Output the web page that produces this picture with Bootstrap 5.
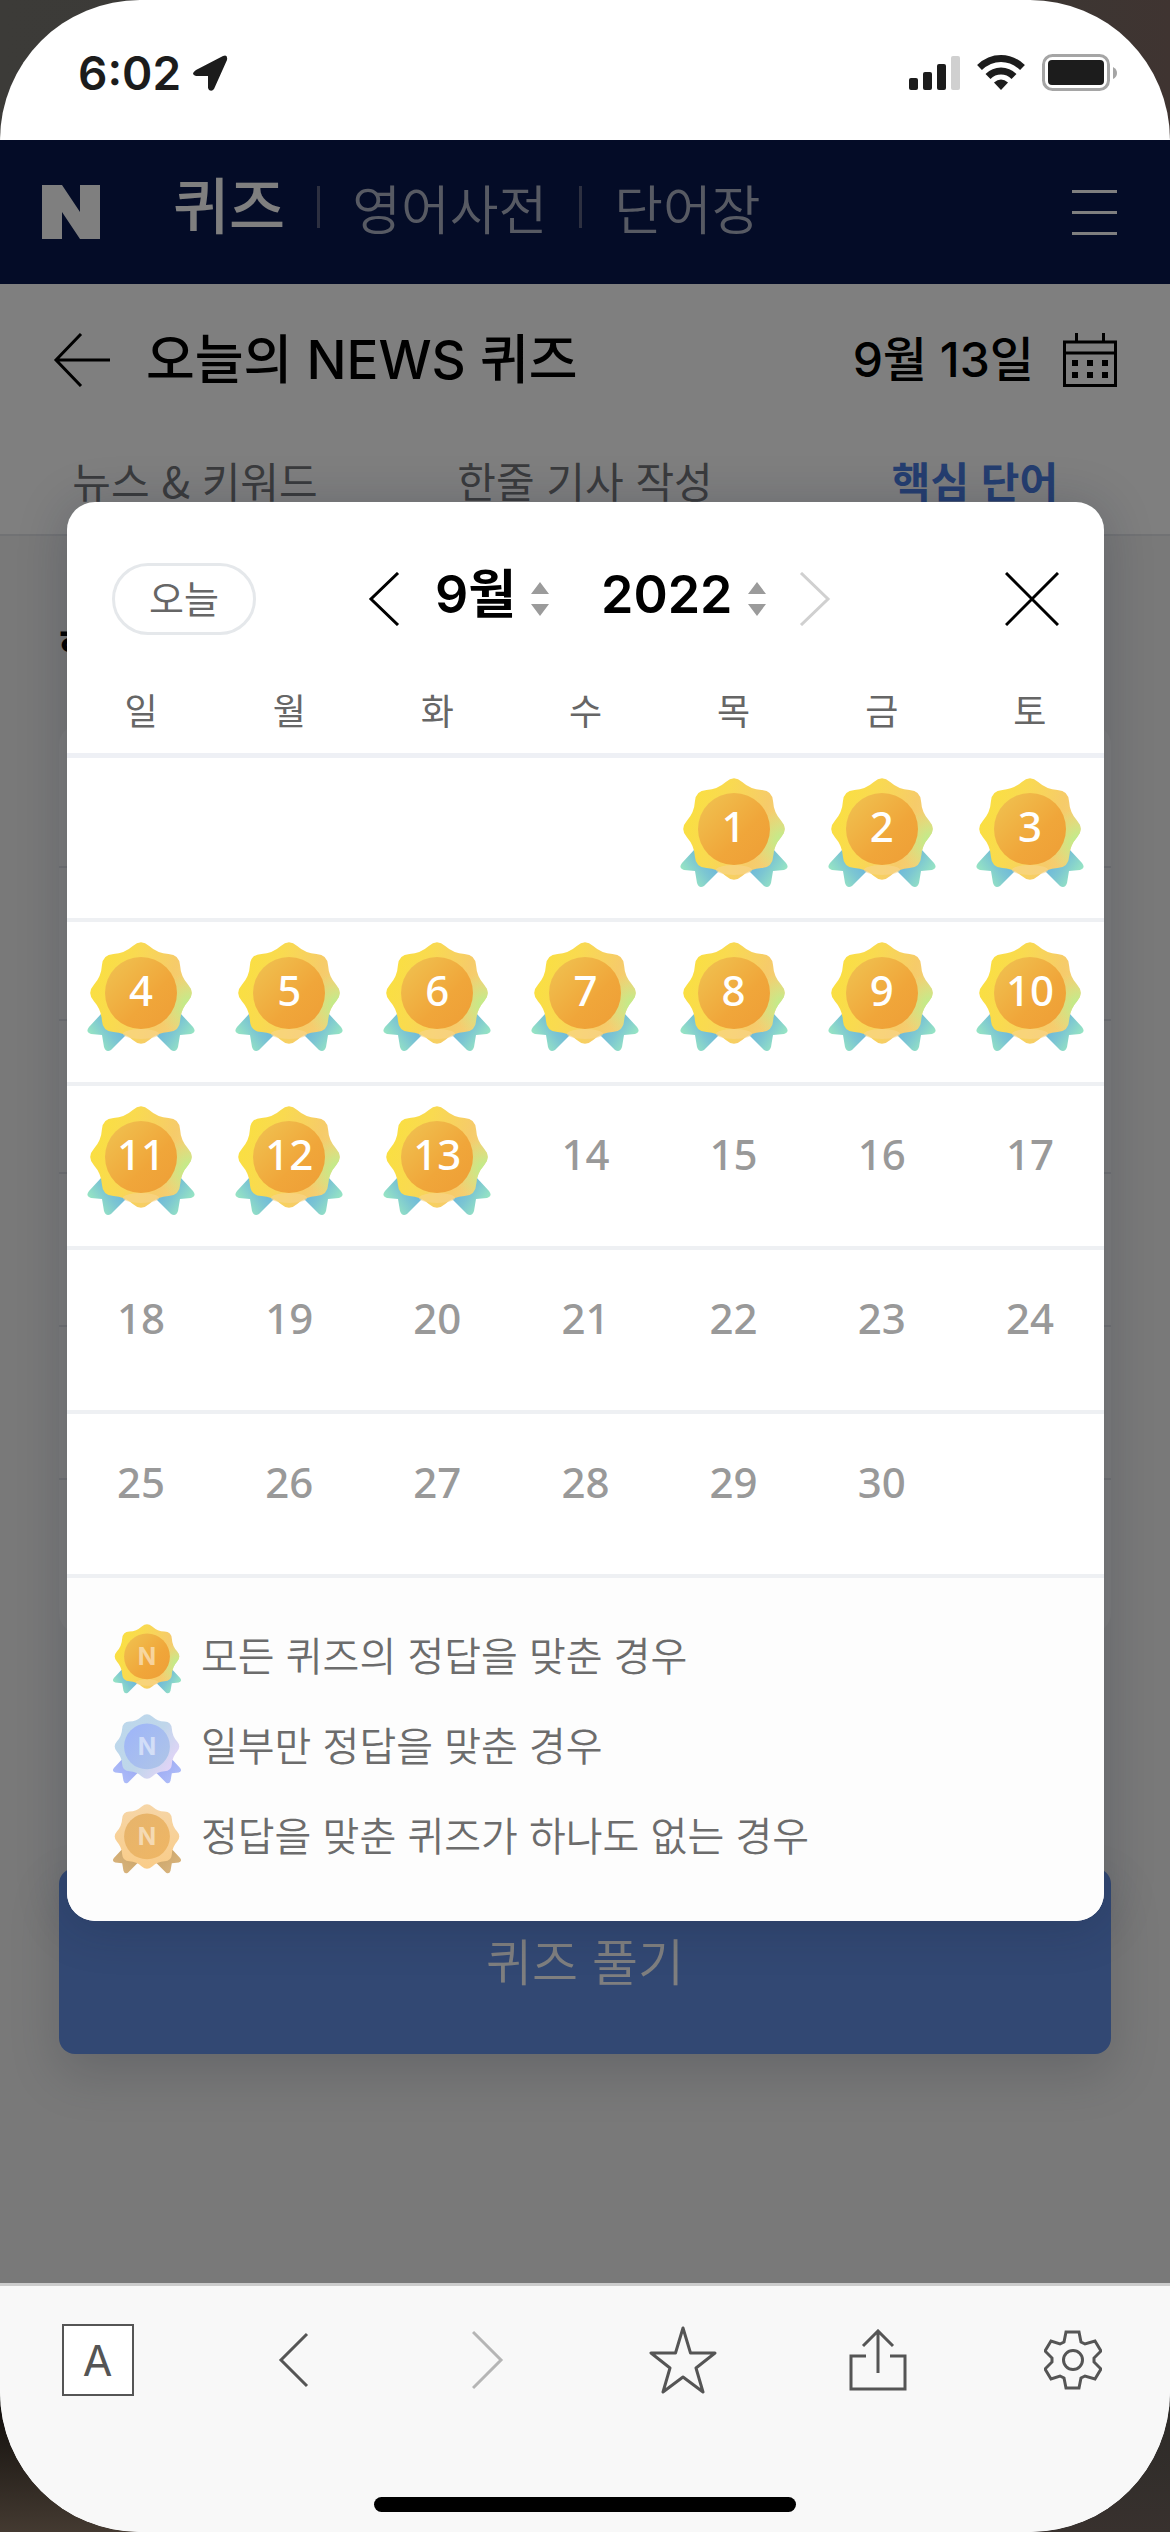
<!DOCTYPE html>
<html lang="ko">
<head>
<meta charset="utf-8">
<meta name="viewport" content="width=device-width, initial-scale=1">
<title>오늘의 NEWS 퀴즈</title>
<link href="https://cdn.jsdelivr.net/npm/bootstrap@5.3.0/dist/css/bootstrap.min.css" rel="stylesheet">
<style>
  :root { --edge: 59px; --mixed: Inter, "Noto Sans CJK KR", sans-serif; }
  body {
    font-family: "Noto Sans CJK KR", sans-serif;
    color: #000;
    background:
      linear-gradient(#0c0a08, #443a31) left bottom / 50% 140px no-repeat,
      linear-gradient(#2b2a27, #38312e) right bottom / 50% 140px no-repeat,
      linear-gradient(90deg, #3c3b38, #3a3834 80%, #3f3431);
  }
  a { color: inherit; text-decoration: none; }
  button { font: inherit; color: inherit; background: none; border: 0; padding: 0; }
  svg { display: block; flex: none; }
  .line-icon { fill: none; stroke: currentColor; stroke-width: 3; }

  .phone-shell { min-height: 100vh; border-radius: 140px; background: #fff; }
  .status-bar { height: 140px; padding: 6px 53px 0 78px; color: #1c1c1c; }
  .status-time { font: 600 46px/60px Inter, sans-serif; margin-right: 11px; }
  .status-icons { gap: 17px; }

  .page-area { background: #f2f2f2; }
  .dim-layer { inset: 0; background: rgba(0, 0, 0, .5); }

  .site-header { height: 144px; padding: 0 53px 0 42px; background: #08184e; color: #fff; }
  .site-nav { margin-left: 73px; gap: 32px; font-size: 53px; line-height: 72px; font-weight: 350; color: #afb4c6; padding-bottom: 10px; }
  .site-nav .current { font-size: 61px; font-weight: 500; color: #fff; padding-bottom: 8px; }
  .site-nav .bar { width: 3px; height: 42px; background: #5a6080; }

  .title-row { height: 152px; padding: 0 53px; }
  .title-row h1 { font: 500 53px/72px var(--mixed); margin-left: 36px; }
  .date-button { font: 500 48px/72px var(--mixed); gap: 29px; }
  .tab-row { font-size: 42px; line-height: 60px; color: #74767a; border-bottom: 2px solid #e2e4e8; padding: 14px 0 24px; }
  .tab-row .current { color: #4a7de0; font-weight: 700; }
  .top-panel { background: #fff; }

  .word-section { padding: 80px var(--edge) 0; }
  .word-section h2 { font-size: 44px; line-height: 60px; font-weight: 700; margin-bottom: 49px; }
  .word-list { background: #fafafa; border-radius: 20px; }
  .word-list li { height: 153px; border-bottom: 2px solid #e2e4e8; }
  .word-list li:first-child { height: 143px; }
  .word-list li:last-child { border-bottom: 0; }
  .start-button { margin: 235px 0 226px; height: 186px; padding-bottom: 4px; border-radius: 16px; background: #6490e6; color: #fff; font-size: 50px; line-height: 72px; font-weight: 350; box-shadow: 0 20px 50px rgba(40, 50, 80, .18); }

  .calendar-dialog { top: 362px; left: 67px; right: 66px; border-radius: 28px; background: #fff; box-shadow: 0 4px 50px rgba(20, 30, 50, .24); }
  .calendar-head { padding: 61px 45px 0; }
  .today-button { width: 144px; height: 72px; border: 3px solid #e5e8eb; border-radius: 36px; font-size: 38px; line-height: 60px; padding-bottom: 4px; color: #666; }
  .month-picker { margin-left: 112px; }
  .month-picker select { appearance: none; border: 0; padding: 0; background: none; font: 600 52px/64px var(--mixed); height: 64px; color: #000; }
  .month-picker .pick-month { width: 86px; margin: 0 10px 8px 35px; }
  .month-picker .pick-year { width: 137px; margin: 0 10px 8px 52px; }
  .month-picker .next { margin-left: 33px; color: #d0d0d0; }

  .month-grid { table-layout: fixed; text-align: center; margin: 0; }
  .month-grid th { padding: 50px 0 20px; font-size: 36px; line-height: 48px; font-weight: 400; color: #666; border-bottom: 5px solid #eef0f5; }
  .month-grid td { padding: 20px 0 30px; border-bottom: 4px solid #eef0f3; height: 164px; vertical-align: top; }
  .day { display: inline-grid; justify-items: center; width: 108px; height: 110px; vertical-align: top; font: 500 42px/96px "Noto Sans", sans-serif; color: #999; }
  .day > * { grid-area: 1 / 1; }
  .day svg { width: 108px; height: 110px; }
  .day.won { color: #fff; }

  .legend-panel { padding: 46px 45px 47px; background: #fdfdfd; gap: 20px; font-size: 40px; line-height: 60px; font-weight: 350; color: #6c6c6c; border-radius: 0 0 28px 28px; }
  .legend-panel li { gap: 19px; height: 70px; }
  .legend-panel svg { width: 70px; height: 70px; }
  .medal-letter { font: 700 38px Inter, sans-serif; fill: #fff; fill-opacity: .5; text-anchor: middle; }

  .browser-bar { background: #f8f8f8; border-top: 3px solid #ccc; border-radius: 0 0 140px 140px; color: #555; }
  .browser-bar nav { height: 147px; }
  .browser-bar .letter-box { width: 72px; height: 72px; border: 2px solid #555; background: #fff; font: 400 43px/68px Inter, sans-serif; }
  .browser-bar .off { color: #b5b5b5; }
  .home-line { width: 36%; height: 15px; border-radius: 8px; background: #000; margin: 64px auto 20px; }
</style>
<script src="https://cdn.jsdelivr.net/npm/bootstrap@5.3.0/dist/js/bootstrap.bundle.min.js"></script>
</head>
<body>

<svg width="0" height="0" class="position-absolute" aria-hidden="true">
  <defs>
    <path id="petals" d="M8.2-47.1Q16.5-39.7 27.5-39.1Q38.5-38.5 39.1-27.5Q39.7-16.5 47.1-8.2Q54.5 0 47.1 8.2Q39.7 16.5 39.1 27.5Q38.5 38.5 27.5 39.1Q16.5 39.7 8.2 47.1Q0 54.5-8.2 47.1Q-16.5 39.7-27.5 39.1Q-38.5 38.5-39.1 27.5Q-39.7 16.5-47.1 8.2Q-54.5 0-47.1-8.2Q-39.7-16.5-39.1-27.5Q-38.5-38.5-27.5-39.1Q-16.5-39.7-8.2-47.1Q0-54.5 8.2-47.1Z"/>
    <path id="tail" d="M-40 21L-52 34Q-56 39-50 41L-39 42L-37 54Q-35 60-30 57L-14 41Z"/>
    <linearGradient id="gGold" x1="0" y1=".3" x2="1" y2=".6"><stop offset="0" stop-color="#fae040"/><stop offset=".35" stop-color="#f9da50"/><stop offset=".75" stop-color="#f6cb6a"/><stop offset="1" stop-color="#f3d27a"/></linearGradient>
    <radialGradient id="gGreen" cx=".98" cy=".62" r=".32"><stop offset="0" stop-color="#b9f08e"/><stop offset="1" stop-color="#c8ec8c" stop-opacity="0"/></radialGradient>
    <linearGradient id="gDisk" x1="0" y1="0" x2="1" y2="1"><stop offset="0" stop-color="#f0c452"/><stop offset=".6" stop-color="#f0a63a"/><stop offset="1" stop-color="#ee9e36"/></linearGradient>
    <linearGradient id="gTeal" x1="1" y1=".2" x2=".1" y2=".8"><stop offset="0" stop-color="#62aee2"/><stop offset=".5" stop-color="#7cc6d2"/><stop offset="1" stop-color="#9decc0"/></linearGradient>
    <linearGradient id="gIce" x1="0" y1="0" x2="1" y2=".7"><stop offset="0" stop-color="#bcd8ec"/><stop offset=".6" stop-color="#bfd6ea"/><stop offset="1" stop-color="#e4d4f8"/></linearGradient>
    <linearGradient id="gIceDisk" x1="0" y1="0" x2="1" y2="1"><stop offset="0" stop-color="#9db4fa"/><stop offset="1" stop-color="#b0c6e6"/></linearGradient>
    <linearGradient id="gIceTail" x1="1" y1="0" x2="0" y2="1"><stop offset="0" stop-color="#98a6f2"/><stop offset="1" stop-color="#b4c2fa"/></linearGradient>
    <linearGradient id="gTan" x1="0" y1="0" x2="0" y2="1"><stop offset="0" stop-color="#f6d6a8"/><stop offset="1" stop-color="#f9cc88"/></linearGradient>
    <linearGradient id="gTanDisk" x1="0" y1="0" x2="1" y2="1"><stop offset="0" stop-color="#e6b46c"/><stop offset="1" stop-color="#efb664"/></linearGradient>
    <linearGradient id="gTanTail" x1="1" y1="0" x2="0" y2="1"><stop offset="0" stop-color="#c8a266"/><stop offset="1" stop-color="#dcb882"/></linearGradient>
    <symbol id="gold" viewBox="-54 -51 108 110">
      <g fill="url(#gTeal)"><use href="#tail"/><use href="#tail" transform="scale(-1 1)"/></g>
      <use href="#petals" fill="url(#gGold)"/><use href="#petals" fill="url(#gGreen)"/>
      <ellipse cy="41" rx="18" ry="5" fill="#f8d68c" opacity=".6"/>
      <circle r="36" fill="url(#gDisk)"/>
    </symbol>
    <symbol id="ice" viewBox="-54 -51 108 110">
      <g fill="url(#gIceTail)"><use href="#tail"/><use href="#tail" transform="scale(-1 1)"/></g>
      <use href="#petals" fill="url(#gIce)"/><circle r="36" fill="url(#gIceDisk)"/>
    </symbol>
    <symbol id="tan" viewBox="-54 -51 108 110">
      <g fill="url(#gTanTail)"><use href="#tail"/><use href="#tail" transform="scale(-1 1)"/></g>
      <use href="#petals" fill="url(#gTan)"/><circle r="36" fill="url(#gTanDisk)"/>
    </symbol>
    <symbol id="updown" viewBox="0 0 18 34"><path d="M9 0L18 12H0ZM0 22H18L9 34Z" fill="#9b9b9b"/></symbol>
  </defs>
</svg>

<div class="phone-shell d-flex flex-column overflow-hidden">

  <div class="status-bar d-flex align-items-center">
    <span class="status-time">6:02</span>
    <svg width="37" height="38" viewBox="0 0 37 38"><path d="M4 16L31 2Q36 0 35 6L22 35Q20 38 17 36L16 34V22H4Q-2 20 4 16Z" fill="currentColor"/></svg>
    <div class="status-icons d-flex align-items-center ms-auto">
      <svg width="51" height="34" viewBox="0 0 51 34" fill="currentColor"><rect y="22" width="9" height="12" rx="2"/><rect x="14" y="16" width="9" height="18" rx="2"/><rect x="28" y="8" width="9" height="26" rx="2"/><rect x="42" width="9" height="34" rx="2" fill="#d0d0d0"/></svg>
      <svg width="48" height="36" viewBox="0 0 48 36"><g fill="none" stroke="currentColor" stroke-width="7"><path d="M2.500 12.500Q12 3.500 24 3.500T45.500 12.500"/><path d="M11 21.500Q16.500 16 24 16T37 21.500"/></g><path d="M17 27.500Q24 21.500 31 27.500L24 35Z" fill="currentColor"/></svg>
      <svg width="75" height="38" viewBox="0 0 75 38"><rect x="1.500" y="1.500" width="65" height="34" rx="9" fill="none" stroke="#a5a5a5" stroke-width="3"/><rect x="6" y="6" width="56" height="25" rx="4" fill="currentColor"/><path d="M71 13Q75 15 75 19T71 25Z" fill="#a5a5a5"/></svg>
    </div>
  </div>

  <div class="page-area position-relative flex-grow-1">
    <header class="site-header d-flex align-items-center">
      <a href="#" aria-label="네이버"><svg width="58" height="54" viewBox="0 0 58 54"><path d="M0 0H20L38 27V0H58V54H38L20 27V54H0Z" fill="#fff"/></svg></a>
      <nav class="site-nav d-flex align-items-center">
        <a href="#" class="current">퀴즈</a><span class="bar"></span>
        <a href="#">영어사전</a><span class="bar"></span>
        <a href="#">단어장</a>
      </nav>
      <button class="ms-auto" aria-label="메뉴"><svg class="line-icon" width="45" height="45" viewBox="0 0 45 45"><path d="M0 1.500H45M0 22.500H45M0 43.500H45"/></svg></button>
    </header>

    <div class="top-panel">
      <div class="title-row d-flex align-items-center">
        <button aria-label="뒤로"><svg class="line-icon" width="57" height="54" viewBox="0 0 57 54"><path d="M28 1L3 27L28 53M3 27H57"/></svg></button>
        <h1 class="mb-0">오늘의 NEWS 퀴즈</h1>
        <button class="date-button d-flex align-items-center ms-auto">9월 13일
          <svg width="54" height="54" viewBox="0 0 54 54"><path d="M1.500 9H52.500V52.500H1.500ZM1.500 20H52.500M13.500 0V9M40.500 0V9" fill="none" stroke="currentColor" stroke-width="3"/><path d="M9 27h6v6H9zM24 27h6v6h-6zM39 27h6v6h-6zM9 39h6v6H9zM24 39h6v6h-6zM39 39h6v6h-6z" fill="currentColor"/></svg>
        </button>
      </div>
      <nav class="tab-row row g-0 text-center">
        <a href="#" class="col">뉴스 &amp; 키워드</a>
        <a href="#" class="col">한줄 기사 작성</a>
        <a href="#" class="col current">핵심 단어</a>
      </nav>
    </div>

    <main class="word-section">
      <h2>핵심</h2>
      <ul class="word-list list-unstyled mb-0"><li></li><li></li><li></li><li></li><li></li><li></li></ul>
      <button class="start-button d-block w-100">퀴즈 풀기</button>
    </main>

    <div class="dim-layer position-absolute"></div>

    <section class="calendar-dialog position-absolute" role="dialog" aria-label="달력">
      <div class="calendar-head d-flex align-items-center">
        <button class="today-button">오늘</button>
        <div class="month-picker d-flex align-items-center">
          <button aria-label="이전 달"><svg class="line-icon" width="32" height="54" viewBox="0 0 32 54"><path d="M30 1L3 27L30 53"/></svg></button>
          <select class="pick-month" aria-label="월"><option>9월</option><option>8월</option></select>
          <svg width="18" height="34"><use href="#updown"/></svg>
          <select class="pick-year" aria-label="연도"><option>2022</option><option>2021</option></select>
          <svg width="18" height="34"><use href="#updown"/></svg>
          <button class="next" aria-label="다음 달"><svg class="line-icon" width="32" height="54" viewBox="0 0 32 54"><path d="M2 1L29 27L2 53"/></svg></button>
        </div>
        <button class="ms-auto" aria-label="닫기"><svg class="line-icon" width="54" height="54" viewBox="0 0 54 54"><path d="M1 1L53 53M53 1L1 53"/></svg></button>
      </div>

      <table class="month-grid w-100">
        <thead><tr><th>일</th><th>월</th><th>화</th><th>수</th><th>목</th><th>금</th><th>토</th></tr></thead>
        <tbody>
          <tr><td></td><td></td><td></td><td></td>
            <td><button class="day won"><svg><use href="#gold"/></svg><span>1</span></button></td>
            <td><button class="day won"><svg><use href="#gold"/></svg><span>2</span></button></td>
            <td><button class="day won"><svg><use href="#gold"/></svg><span>3</span></button></td></tr>
          <tr>
            <td><button class="day won"><svg><use href="#gold"/></svg><span>4</span></button></td>
            <td><button class="day won"><svg><use href="#gold"/></svg><span>5</span></button></td>
            <td><button class="day won"><svg><use href="#gold"/></svg><span>6</span></button></td>
            <td><button class="day won"><svg><use href="#gold"/></svg><span>7</span></button></td>
            <td><button class="day won"><svg><use href="#gold"/></svg><span>8</span></button></td>
            <td><button class="day won"><svg><use href="#gold"/></svg><span>9</span></button></td>
            <td><button class="day won"><svg><use href="#gold"/></svg><span>10</span></button></td></tr>
          <tr>
            <td><button class="day won"><svg><use href="#gold"/></svg><span>11</span></button></td>
            <td><button class="day won"><svg><use href="#gold"/></svg><span>12</span></button></td>
            <td><button class="day won"><svg><use href="#gold"/></svg><span>13</span></button></td>
            <td><span class="day">14</span></td><td><span class="day">15</span></td><td><span class="day">16</span></td><td><span class="day">17</span></td></tr>
          <tr><td><span class="day">18</span></td><td><span class="day">19</span></td><td><span class="day">20</span></td><td><span class="day">21</span></td><td><span class="day">22</span></td><td><span class="day">23</span></td><td><span class="day">24</span></td></tr>
          <tr><td><span class="day">25</span></td><td><span class="day">26</span></td><td><span class="day">27</span></td><td><span class="day">28</span></td><td><span class="day">29</span></td><td><span class="day">30</span></td><td></td></tr>
        </tbody>
      </table>

      <ul class="legend-panel list-unstyled d-flex flex-column mb-0">
        <li class="d-flex align-items-start"><svg viewBox="0 0 108 110"><use href="#gold" width="108" height="110"/><text class="medal-letter" x="54" y="65">N</text></svg>모든 퀴즈의 정답을 맞춘 경우</li>
        <li class="d-flex align-items-start"><svg viewBox="0 0 108 110"><use href="#ice" width="108" height="110"/><text class="medal-letter" x="54" y="65">N</text></svg>일부만 정답을 맞춘 경우</li>
        <li class="d-flex align-items-start"><svg viewBox="0 0 108 110"><use href="#tan" width="108" height="110"/><text class="medal-letter" x="54" y="65">N</text></svg>정답을 맞춘 퀴즈가 하나도 없는 경우</li>
      </ul>
    </section>
  </div>

  <footer class="browser-bar">
    <nav class="row g-0 align-items-center">
      <div class="col d-flex justify-content-center"><button class="letter-box">A</button></div>
      <div class="col d-flex justify-content-center"><button aria-label="뒤로"><svg class="line-icon" width="32" height="56" viewBox="0 0 32 56"><path d="M30 2L4 28L30 54"/></svg></button></div>
      <div class="col d-flex justify-content-center"><button class="off" aria-label="앞으로"><svg class="line-icon" width="32" height="60" viewBox="0 0 32 60"><path d="M1 2L29 30L1 58"/></svg></button></div>
      <div class="col d-flex justify-content-center"><button aria-label="즐겨찾기"><svg class="line-icon" width="68" height="68" viewBox="0 0 68 68"><path d="M34 2L41.500 27H66L47 42L54 66L34 51L14 66L21 42L2 27H26.500Z" stroke-linejoin="round"/></svg></button></div>
      <div class="col d-flex justify-content-center"><button aria-label="공유"><svg class="line-icon" width="58" height="62" viewBox="0 0 58 62"><path d="M17 27H2V60H56V27H41M29 44V2M14 17L29 2L44 17"/></svg></button></div>
      <div class="col d-flex justify-content-center"><button aria-label="설정"><svg class="line-icon" width="58" height="60" viewBox="0 0 58 60"><path d="M22 2H35L37 12L41 14L51 11L57 21L50 28V32L57 39L51 49L41 46L37 48L35 58H22L20 48L16 46L7 49L1 39L8 32V28L1 21L7 11L16 14L20 12Z"/><circle cx="29" cy="30" r="9.500"/></svg></button></div>
    </nav>
    <div class="home-line"></div>
  </footer>
</div>
</body>
</html>
